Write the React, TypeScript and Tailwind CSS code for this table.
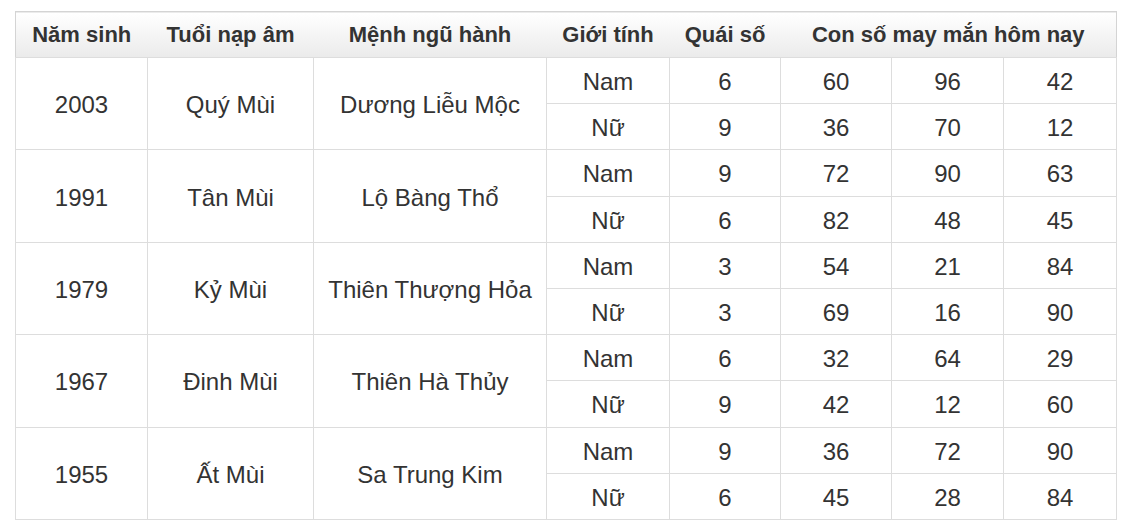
const rows = [
  { year: "2003", tuoi: "Quý Mùi", menh: "Dương Liễu Mộc", nam: ["6", "60", "96", "42"], nu: ["9", "36", "70", "12"] },
  { year: "1991", tuoi: "Tân Mùi", menh: "Lộ Bàng Thổ", nam: ["9", "72", "90", "63"], nu: ["6", "82", "48", "45"] },
  { year: "1979", tuoi: "Kỷ Mùi", menh: "Thiên Thượng Hỏa", nam: ["3", "54", "21", "84"], nu: ["3", "69", "16", "90"] },
  { year: "1967", tuoi: "Đinh Mùi", menh: "Thiên Hà Thủy", nam: ["6", "32", "64", "29"], nu: ["9", "42", "12", "60"] },
  { year: "1955", tuoi: "Ất Mùi", menh: "Sa Trung Kim", nam: ["9", "36", "72", "90"], nu: ["6", "45", "28", "84"] },
];

const td = "border border-[#dddddd] text-center align-middle h-[46.2px] px-0 pt-[3px] pb-0 leading-none";

export default function App() {
  return (
    <div className="min-h-screen bg-white pl-[15px] pt-[11px] font-['Liberation_Sans',Arial,sans-serif] text-[24px] text-[#333333]">
      <table className="w-[1101px] border-collapse table-fixed">
        <colgroup>
          <col className="w-[132px]" />
          <col className="w-[166px]" />
          <col className="w-[233px]" />
          <col className="w-[123px]" />
          <col className="w-[111px]" />
          <col className="w-[111px]" />
          <col className="w-[112px]" />
          <col className="w-[113px]" />
        </colgroup>
        <thead>
          <tr className="bg-gradient-to-b from-white to-[#ebebeb] border border-[#d4d4d4] text-[22px]">
            <th className="h-[46px] font-bold text-center">Năm sinh</th>
            <th className="font-bold text-center">Tuổi nạp âm</th>
            <th className="font-bold text-center">Mệnh ngũ hành</th>
            <th className="font-bold text-center">Giới tính</th>
            <th className="font-bold text-center">Quái số</th>
            <th colSpan={3} className="font-bold text-center">Con số may mắn hôm nay</th>
          </tr>
        </thead>
        <tbody>
          {rows.map((r) => (
            <>
              <tr key={r.year + "a"}>
                <td rowSpan={2} className={td}>{r.year}</td>
                <td rowSpan={2} className={td}>{r.tuoi}</td>
                <td rowSpan={2} className={td}>{r.menh}</td>
                <td className={td}>Nam</td>
                {r.nam.map((v, i) => (
                  <td key={i} className={td}>{v}</td>
                ))}
              </tr>
              <tr key={r.year + "b"}>
                <td className={td}>Nữ</td>
                {r.nu.map((v, i) => (
                  <td key={i} className={td}>{v}</td>
                ))}
              </tr>
            </>
          ))}
        </tbody>
      </table>
    </div>
  );
}
